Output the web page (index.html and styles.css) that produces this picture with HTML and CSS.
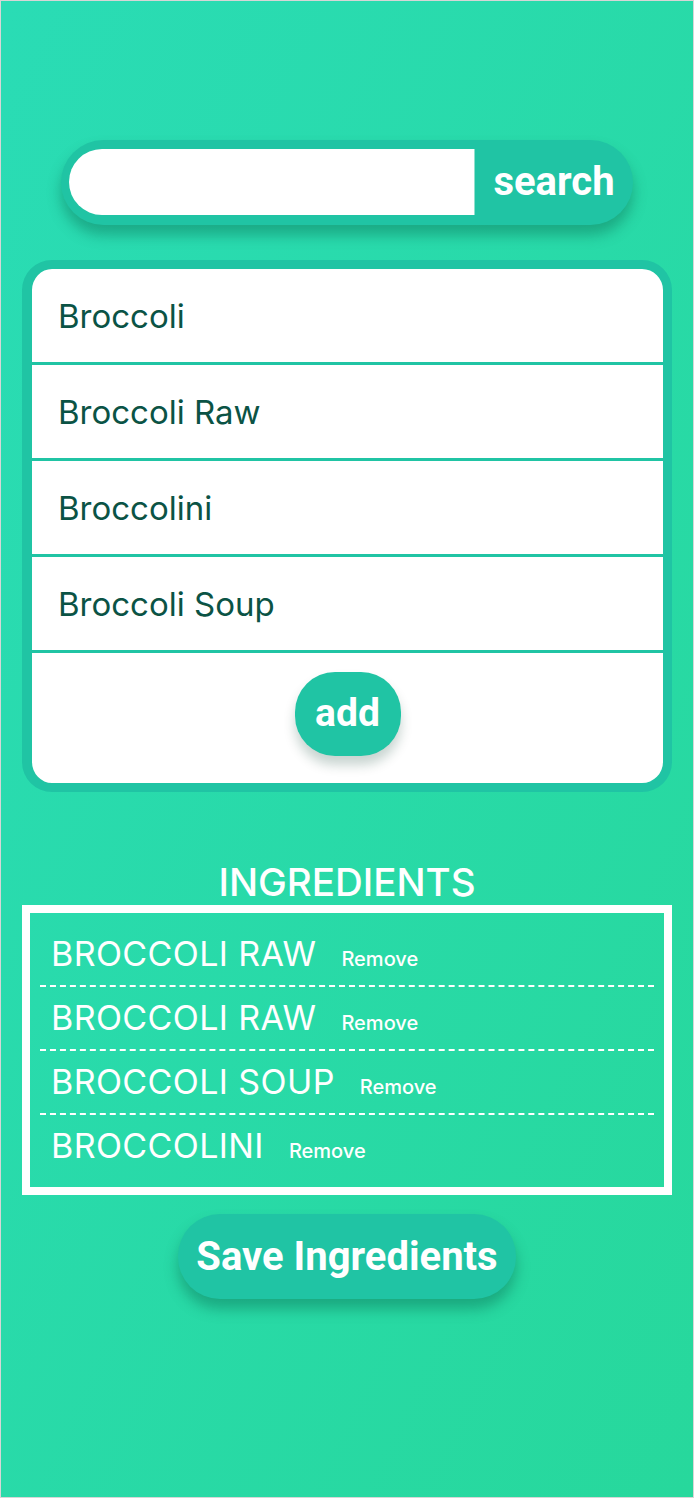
FILE: index.html
```html
<!DOCTYPE html>
<html>
<head>
<meta charset="utf-8">
<link rel="stylesheet" href="styles.css">
</head>
<body>
<div class="page">
  <div class="search">
    <input class="search-input" type="text">
    <button class="search-btn">search</button>
  </div>

  <div class="results">
    <div class="result">Broccoli</div>
    <div class="result">Broccoli Raw</div>
    <div class="result">Broccolini</div>
    <div class="result">Broccoli Soup</div>
    <div class="add-row"><button class="add-btn">add</button></div>
  </div>

  <h2 class="heading">INGREDIENTS</h2>
  <div class="ingredients">
    <div class="ing"><span class="ing-name">BROCCOLI RAW</span><span class="remove">Remove</span></div>
    <div class="ing"><span class="ing-name">BROCCOLI RAW</span><span class="remove">Remove</span></div>
    <div class="ing"><span class="ing-name">BROCCOLI SOUP</span><span class="remove">Remove</span></div>
    <div class="ing"><span class="ing-name">BROCCOLINI</span><span class="remove">Remove</span></div>
  </div>

  <div class="save-row"><button class="save-btn">Save Ingredients</button></div>
</div>
</body>
</html>
```

FILE: styles.css
```css
html, body {
  margin: 0;
  padding: 0;
}
body {
  font-family: Inter, Roboto, "Liberation Sans", sans-serif;
}
.page {
  box-sizing: border-box;
  width: 694px;
  height: 1498px;
  border: 1px solid #d6d6d6;
  background: linear-gradient(to bottom right, #2adcb5, #27d89c);
  padding-top: 139px;
  display: flex;
  flex-direction: column;
  align-items: center;
}
.search {
  width: 572px;
  height: 85px;
  display: flex;
  background: #20c4a4;
  border-radius: 43px;
  box-shadow: 0 10px 14px rgba(10, 110, 85, 0.45);
}
.search-input {
  flex: 1;
  margin: 9px 0 10px 8px;
  border: none;
  outline: none;
  background: #fff;
  border-radius: 33px 0 0 33px;
  border-right: 1px solid #8fe0cd;
}
.search-btn {
  width: 158px;
  border: none;
  background: transparent;
  color: #fff;
  font-family: Roboto, "Liberation Sans", sans-serif;
  font-weight: 700;
  font-size: 40px;
  padding: 0 0 2px 0;
  text-align: center;
}
.results {
  box-sizing: border-box;
  width: 650px;
  margin-top: 35px;
  border: 9px solid #20c4a4;
  border-left-width: 10px;
  border-radius: 30px;
  background: #fff;
  overflow: hidden;
}
.result {
  height: 93px;
  border-bottom: 3px solid #20c4a4;
  padding-left: 26px;
  display: flex;
  align-items: center;
  font-size: 33px;
  color: #0b5345;
}
.add-row {
  height: 130px;
  display: flex;
  justify-content: center;
  align-items: flex-start;
  padding-top: 19px;
  box-sizing: border-box;
}
.add-btn {
  width: 106px;
  height: 84px;
  border: none;
  border-radius: 40px;
  background: #20c4a4;
  color: #fff;
  font-family: Roboto, "Liberation Sans", sans-serif;
  font-weight: 700;
  font-size: 39px;
  padding: 0 0 2px;
  box-shadow: 0 9px 12px rgba(0, 60, 40, 0.22);
}
.heading {
  margin: 68px 0 1px;
  height: 44px;
  line-height: 44px;
  font-size: 38.5px;
  font-weight: 500;
  color: #fff;
}
.ingredients {
  box-sizing: border-box;
  width: 650px;
  border: 8px solid #fff;
  padding: 10px 10px;
}
.ing {
  height: 62px;
  display: flex;
  align-items: baseline;
  padding-left: 11px;
  line-height: 62px;
  border-bottom: 2px dashed #fff;
  color: #fff;
}
.ing:last-child {
  border-bottom: none;
}
.ing-name {
  font-size: 34px;
  letter-spacing: 0.4px;
}
.remove {
  font-size: 20px;
  font-weight: 500;
  margin-left: 25px;
}
.save-row {
  margin-top: 19px;
}
.save-btn {
  width: 338px;
  height: 85px;
  border: none;
  border-radius: 42px;
  background: #20c4a4;
  color: #fff;
  font-family: Roboto, "Liberation Sans", sans-serif;
  font-weight: 700;
  font-size: 40px;
  padding: 0;
  box-shadow: 0 10px 14px rgba(10, 110, 85, 0.45);
}
```
